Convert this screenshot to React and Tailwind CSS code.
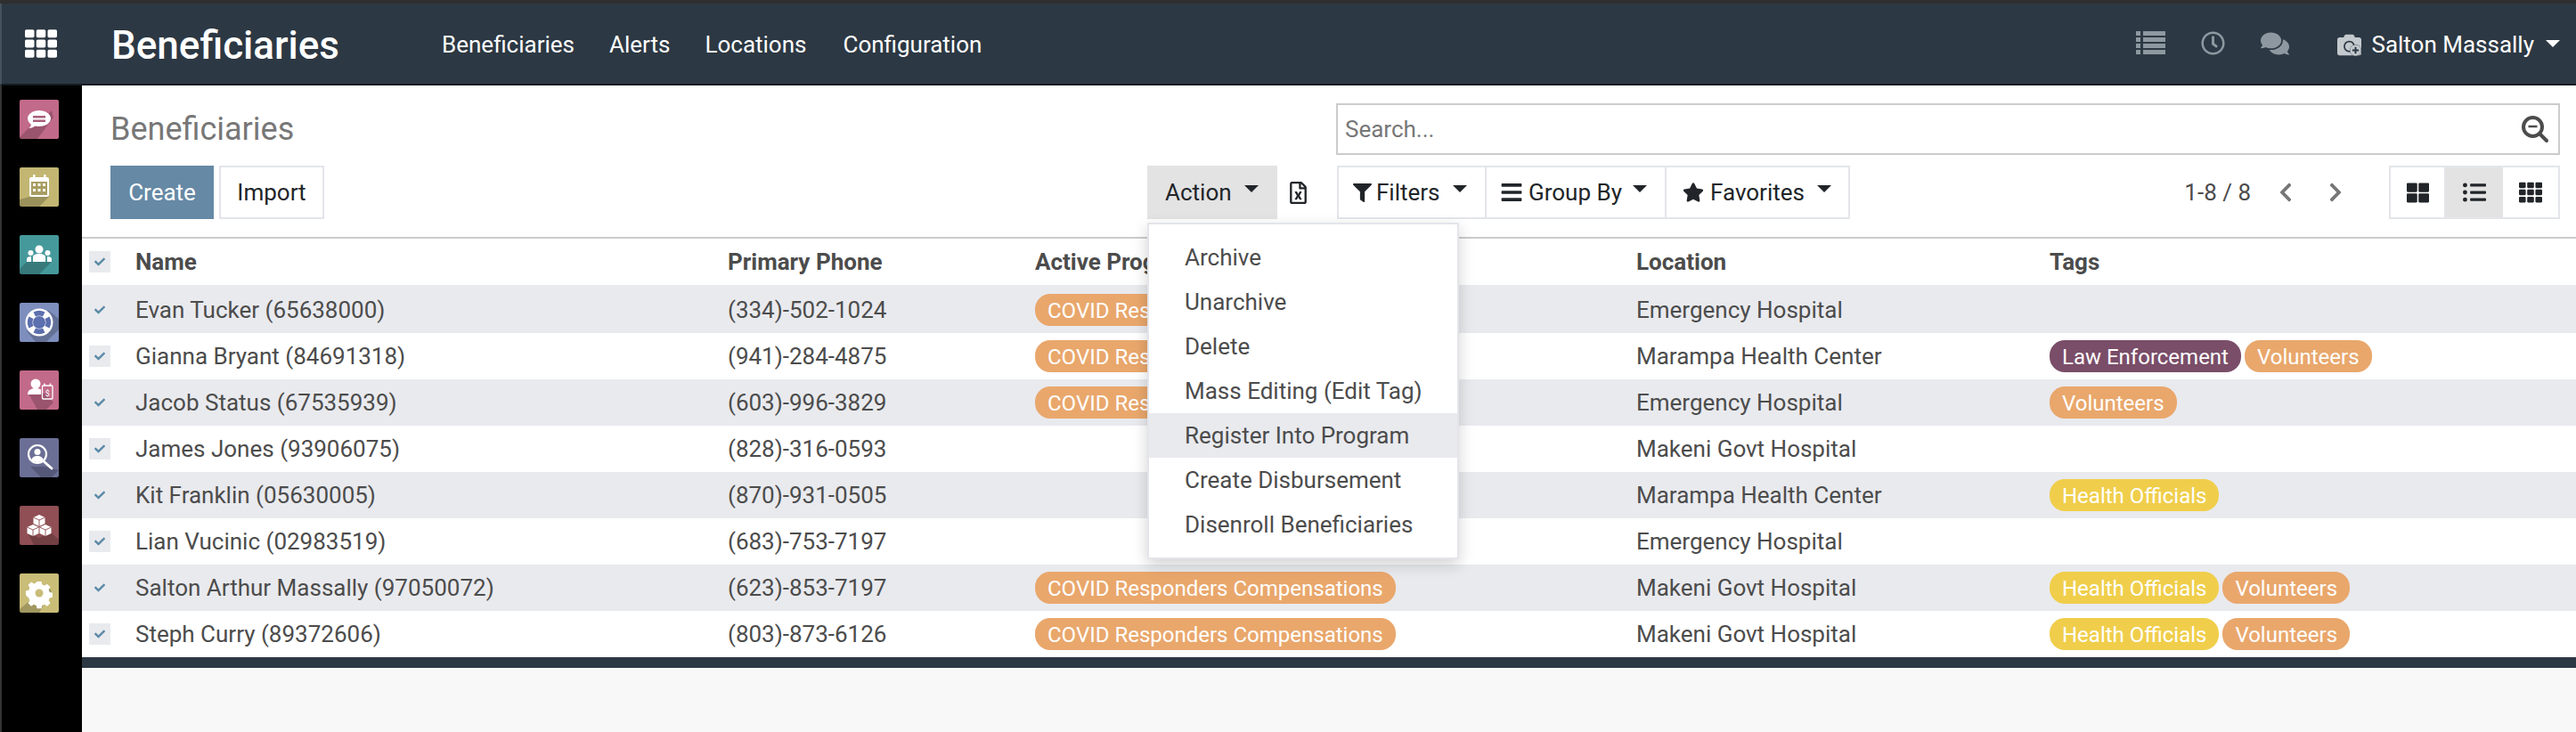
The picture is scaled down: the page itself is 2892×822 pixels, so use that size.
import React from 'react';
import {
  FaTh,
  FaThLarge,
  FaListUl,
  FaRegClock,
  FaComments,
  FaFilter,
  FaBars,
  FaStar,
  FaCheck,
  FaChevronLeft,
  FaChevronRight,
  FaRegFileExcel,
  FaCamera,
  FaPlusCircle,
} from 'react-icons/fa';

const tagStyles = {
  covid: 'bg-[#e9a76c]',
  volunteers: 'bg-[#e9a76c]',
  health: 'bg-[#f0ce4b]',
  law: 'bg-[#7a4d68]',
};

const program = 'COVID Responders Compensations';

const rows = [
  { name: 'Evan Tucker (65638000)', phone: '(334)-502-1024', program: true, location: 'Emergency Hospital', tags: [] },
  { name: 'Gianna Bryant (84691318)', phone: '(941)-284-4875', program: true, location: 'Marampa Health Center', tags: [['Law Enforcement', 'law'], ['Volunteers', 'volunteers']] },
  { name: 'Jacob Status (67535939)', phone: '(603)-996-3829', program: true, location: 'Emergency Hospital', tags: [['Volunteers', 'volunteers']] },
  { name: 'James Jones (93906075)', phone: '(828)-316-0593', program: false, location: 'Makeni Govt Hospital', tags: [] },
  { name: 'Kit Franklin (05630005)', phone: '(870)-931-0505', program: false, location: 'Marampa Health Center', tags: [['Health Officials', 'health']] },
  { name: 'Lian Vucinic (02983519)', phone: '(683)-753-7197', program: false, location: 'Emergency Hospital', tags: [] },
  { name: 'Salton Arthur Massally (97050072)', phone: '(623)-853-7197', program: true, location: 'Makeni Govt Hospital', tags: [['Health Officials', 'health'], ['Volunteers', 'volunteers']] },
  { name: 'Steph Curry (89372606)', phone: '(803)-873-6126', program: true, location: 'Makeni Govt Hospital', tags: [['Health Officials', 'health'], ['Volunteers', 'volunteers']] },
];

const actions = ['Archive', 'Unarchive', 'Delete', 'Mass Editing (Edit Tag)', 'Register Into Program', 'Create Disbursement', 'Disenroll Beneficiaries'];

const Caret = ({ className }) => (
  <span className={`inline-block w-0 h-0 border-x-[8px] border-x-transparent border-t-[8px] ${className}`} />
);

const Tag = ({ label, kind }) => (
  <span className={`inline-flex items-center h-9 pt-[2px] px-[14px] rounded-[17px] text-white text-[24px] leading-none whitespace-nowrap ${tagStyles[kind]}`}>
    {label}
  </span>
);

const Checkbox = () => (
  <div className="w-6 h-6 bg-[#e9eaee] flex items-center justify-center">
    <FaCheck size={12} className="text-[#5b8aa6]" />
  </div>
);

// App tile: flat colour with the long diagonal shadow
const AppTile = ({ color, children }) => (
  <svg width="44" height="44" viewBox="0 0 44 44" className="block">
    <rect width="44" height="44" rx="2" fill={color} />
    {children}
  </svg>
);

const shadow = (d) => <path d={d} fill="#000" opacity="0.2" />;

const SideIcons = () => (
  <div className="w-[92px] shrink-0 bg-black border-l-2 border-[#333] pl-5 pt-4 flex flex-col gap-8">
    <AppTile color="#c26a89">
      {shadow('M10 32 L18 30 L36 12 L38 20 L20 44 L0 44 L0 42 Z')}
      <path d="M22 12c-7 0-13 4-13 9 0 3 2 5 4 7-.3 2-1.400 3-2.500 4 3 0 5-1 6.500-2.500 1.500.3 3.300.5 5 .5 7 0 13-4 13-9s-6-9-13-9z" fill="#fff" />
      <path d="M15 18h14v2.500H15zM15 22.500h14V25H15z" fill="#a85f7c" />
    </AppTile>
    <AppTile color="#c2b672">
      {shadow('M11 33 L33 12 L33 33 L22 44 L0 44 L0 36 Z')}
      <rect x="11" y="11" width="22" height="22" rx="2" fill="#fff" />
      <rect x="15" y="8" width="2.500" height="5" fill="#fff" />
      <rect x="27" y="8" width="2.500" height="5" fill="#fff" />
      <rect x="13" y="16" width="18" height="15" fill="#a89d62" />
      <path d="M15 18h3v3h-3zM20.500 18h3v3h-3zM26 18h3v3h-3zM15 24h3v3h-3zM20.500 24h3v3h-3zM26 24h3v3h-3z" fill="#fff" />
    </AppTile>
    <AppTile color="#46999b">
      {shadow('M8 30 L36 30 L22 44 L0 44 L0 38 Z')}
      <circle cx="22" cy="16" r="4.500" fill="#fff" />
      <circle cx="12.500" cy="20" r="3" fill="#fff" />
      <circle cx="31.500" cy="20" r="3" fill="#fff" />
      <path d="M15 30v-5c0-3 3-4 7-4s7 1 7 4v5z" fill="#fff" />
      <path d="M8 30v-3c0-2 2-3 5-3v6zM36 30v-3c0-2-2-3-5-3v6z" fill="#fff" />
    </AppTile>
    <AppTile color="#7e8ebd">
      {shadow('M8 32 L32 8 L44 18 L44 30 L30 44 L18 44 Z')}
      <circle cx="22" cy="22" r="15.500" fill="#fff" />
      <circle cx="22" cy="22" r="7" fill="#5c6fae" />
      <path d="M15.500 10.500a14 14 0 0 1 13 0l-2.500 5a9 9 0 0 0-8 0zM15.500 33.500a14 14 0 0 0 13 0l-2.500-5a9 9 0 0 1-8 0zM10.500 15.500a14 14 0 0 0 0 13l5-2.500a9 9 0 0 1 0-8zM33.500 15.500a14 14 0 0 1 0 13l-5-2.500a9 9 0 0 0 0-8z" fill="#5c6fae" />
    </AppTile>
    <AppTile color="#c26a89">
      {shadow('M10 26 L30 26 L38 36 L30 44 L20 44 Z')}
      <circle cx="18" cy="15" r="5.500" fill="#fff" />
      <path d="M9 27c0-5 4-7 9-7 2.500 0 4.500.5 6 1.500V27z" fill="#fff" />
      <rect x="25.500" y="17" width="11.500" height="15" rx="1" fill="none" stroke="#fff" strokeWidth="1.300" />
      <path d="M28 14.500v3M34.500 14.500v3" stroke="#fff" strokeWidth="1.500" />
      <text x="31.200" y="29" fontSize="9" textAnchor="middle" fill="#fff" fontFamily="Roboto, sans-serif">$</text>
    </AppTile>
    <AppTile color="#6b6f96">
      {shadow('M12 32 L28 32 L44 36 L36 44 L24 44 Z')}
      <circle cx="20" cy="18" r="10" fill="none" stroke="#fff" strokeWidth="2.200" />
      <circle cx="20" cy="15.500" r="3.500" fill="#fff" />
      <path d="M13.500 25c0-3.500 3-5 6.500-5s6.500 1.500 6.500 5c-3 2.500-10 2.500-13 0z" fill="#fff" />
      <path d="M27 26l9 8" stroke="#fff" strokeWidth="3" strokeLinecap="round" />
    </AppTile>
    <AppTile color="#8f4f54">
      {shadow('M9 30 L22 36 L35 30 L44 38 L44 44 L16 44 Z')}
      <path d="M22 10l6.500 3v7L22 23l-6.500-3v-7z" fill="#fff" />
      <path d="M15 21l6.500 3v7L15 34l-6.500-3v-7z" fill="#fff" />
      <path d="M29 21l6.500 3v7L29 34l-6.500-3v-7z" fill="#fff" />
      <path d="M15.500 13l6.500 3 6.500-3M8.500 24l6.500 3 6.500-3M22.500 24l6.500 3 6.500-3M22 16v7M15 27v7M29 27v7" fill="none" stroke="#8f4f54" strokeWidth="0.900" />
    </AppTile>
    <AppTile color="#c9bd78">
      {shadow('M12 30 L30 12 L36 20 L22 44 L0 44 L0 40 Z')}
      <path d="M19.500 9h5l.8 3.500 2.700 1.100 3-1.900 3.500 3.500-1.900 3 1.100 2.700 3.300.8v5l-3.300.8-1.100 2.700 1.900 3-3.500 3.500-3-1.900-2.700 1.100-.8 3.300h-5l-.8-3.300-2.700-1.100-3 1.900-3.500-3.500 1.900-3-1.100-2.700L7 24.500v-5l3.300-.8 1.100-2.700-1.900-3 3.500-3.500 3 1.900 2.700-1.100z" fill="#fff" />
      <circle cx="22" cy="22" r="4.500" fill="#c9bd78" />
    </AppTile>
  </div>
);

const NavBar = () => (
  <div className="shrink-0">
    <div className="h-1 bg-[#2f2f2f]" />
    <div className="h-[92px] bg-[#2c3843] border-l-2 border-b-2 border-l-[#46525c] border-b-[#141c22] flex items-center text-white pr-[18px]">
      <FaTh size={36} className="ml-[26px] shrink-0" />
      <span className="ml-[61px] mt-[3px] text-[44px] font-medium leading-none">Beneficiaries</span>
      <div className="ml-[115px] mt-[3px] flex items-center text-[26px]">
        <span>Beneficiaries</span>
        <span className="ml-[39px]">Alerts</span>
        <span className="ml-[39px]">Locations</span>
        <span className="ml-[41px]">Configuration</span>
      </div>
      <div className="ml-auto flex items-center text-[#8e98a0]">
        <svg width="33" height="26" viewBox="0 0 33 26" fill="currentColor" className="-mt-[2px]">
          <path d="M0 0h5v5H0zM8 0h25v5H8zM0 7h5v5H0zM8 7h25v5H8zM0 14h5v5H0zM8 14h25v5H8zM0 21h5v5H0zM8 21h25v5H8z" />
        </svg>
        <FaRegClock size={27} className="ml-[40px] -mt-[2px]" />
        <FaComments size={32} className="ml-[40px]" />
        <div className="relative ml-[54px] w-[27px] h-6">
          <FaCamera size={27} className="text-[#c4c9cd]" />
          <FaPlusCircle size={13} className="absolute right-0 -bottom-[2px] text-[#c4c9cd] bg-[#2c3843] rounded-full" />
        </div>
        <span className="ml-[11px] mt-[3px] text-[26px] text-white">Salton Massally</span>
        <Caret className="ml-[13px] border-t-white" />
      </div>
    </div>
  </div>
);

const ControlPanel = () => (
  <div className="bg-white pt-5 pb-5 pr-[18px] border-b-2 border-[#ccc] shrink-0">
    <div className="flex items-center h-[58px]">
      <span className="ml-8 text-[36px] text-[#777] leading-none">Beneficiaries</span>
      <div className="ml-auto w-[1374px] h-[58px] border-2 border-[#ccc] flex items-center pl-2 pr-[10px]">
        <span className="text-[26px] text-[#777]">Search...</span>
        <svg width="32" height="32" viewBox="0 0 32 32" className="ml-auto">
          <circle cx="13.500" cy="13.500" r="10.500" fill="none" stroke="#4c4c4c" strokeWidth="4" />
          <path d="M8.500 13h10" stroke="#4c4c4c" strokeWidth="2.500" />
          <path d="M21 21l8 8" stroke="#4c4c4c" strokeWidth="4" strokeLinecap="round" />
        </svg>
      </div>
    </div>
    <div className="flex items-center h-[60px] mt-3 text-[26px]">
      <button className="ml-8 w-[116px] h-[60px] bg-[#6689a5] text-white">Create</button>
      <button className="ml-[6px] w-[118px] h-[60px] border-2 border-[#e3e5ea] text-[#212529]">Import</button>

      <div className="relative ml-[924px]">
        <button className="w-[146px] h-[60px] bg-[#e3e3e3] text-[#212529] flex items-center pl-5">
          Action
          <Caret className="ml-[14px] -mt-2 border-t-[#212529]" />
        </button>
        <div className="absolute left-0 top-16 z-10 w-[350px] bg-white border-2 border-[#e3e5ea] py-3 shadow-[0_6px_16px_rgba(0,0,0,0.18)] text-[#4c4c4c]">
          {actions.map((item) => (
            <div key={item} className={`h-[50px] pl-10 flex items-center ${item === 'Register Into Program' ? 'bg-[#e9eaee]' : ''}`}>
              {item}
            </div>
          ))}
        </div>
      </div>
      <FaRegFileExcel size={25} className="ml-[11px] text-[#212529]" />

      <div className="ml-[31px] w-[576px] h-[60px] border-2 border-[#e3e5ea] flex text-[#212529]">
        <div className="w-[166px] border-r-2 border-[#e3e5ea] flex items-center pl-[16px]">
          <FaFilter size={21} />
          <span className="ml-[5px]">Filters</span>
          <Caret className="ml-[14px] -mt-2 border-t-[#212529]" />
        </div>
        <div className="w-[202px] border-r-2 border-[#e3e5ea] flex items-center pl-[15px]">
          <FaBars size={26} />
          <span className="ml-[6px]">Group By</span>
          <Caret className="ml-[12px] -mt-2 border-t-[#212529]" />
        </div>
        <div className="flex-1 flex items-center pl-[18px]">
          <FaStar size={24} />
          <span className="ml-[7px]">Favorites</span>
          <Caret className="ml-[14px] -mt-2 border-t-[#212529]" />
        </div>
      </div>

      <span className="ml-auto text-[#4c4c4c]">1-8 / 8</span>
      <FaChevronLeft size={24} className="ml-[27px] text-[#777]" />
      <FaChevronRight size={24} className="ml-[32px] text-[#777]" />
      <div className="ml-[48px] w-[192px] h-[60px] border-2 border-[#e3e5ea] flex text-[#212529]">
        <div className="w-[62px] flex items-center justify-center border-r-2 border-[#e3e5ea]">
          <FaThLarge size={25} />
        </div>
        <div className="w-[64px] bg-[#e3e3e3] flex items-center justify-center">
          <FaListUl size={26} />
        </div>
        <div className="flex-1 flex items-center justify-center">
          <FaTh size={26} />
        </div>
      </div>
    </div>
  </div>
);

const DataTable = () => (
  <div className="bg-white text-[26px] text-[#4c4c4c] shrink-0">
    <div className="flex h-[52px] items-center font-bold">
      <div className="w-[60px] pl-2"><Checkbox /></div>
      <div className="w-[665px]">Name</div>
      <div className="w-[345px]">Primary Phone</div>
      <div className="w-[675px]">Active Programs</div>
      <div className="w-[464px]">Location</div>
      <div className="flex-1">Tags</div>
    </div>
    {rows.map((row, i) => (
      <div key={row.name} className={`flex items-center h-[52px] ${i === 0 ? 'box-content border-t-2 border-[#e9eaee]' : ''} ${i % 2 === 0 ? 'bg-[#e9eaee]' : 'bg-white'}`}>
        <div className="w-[60px] pl-2"><Checkbox /></div>
        <div className="w-[665px]">{row.name}</div>
        <div className="w-[345px]">{row.phone}</div>
        <div className="w-[675px]">{row.program && <Tag label={program} kind="covid" />}</div>
        <div className="w-[464px]">{row.location}</div>
        <div className="flex-1 flex gap-1">
          {row.tags.map(([label, kind]) => <Tag key={label} label={label} kind={kind} />)}
        </div>
      </div>
    ))}
  </div>
);

export default function App() {
  return (
    <div className="w-[2892px] h-[822px] overflow-hidden flex flex-col bg-black font-['Roboto',sans-serif]">
      <NavBar />
      <div className="flex flex-1 min-h-0">
        <SideIcons />
        <div className="flex-1 flex flex-col bg-[#f8f8f8] min-w-0">
          <ControlPanel />
          <DataTable />
          <div className="h-3 bg-[#2c3843] shrink-0" />
        </div>
      </div>
    </div>
  );
}
